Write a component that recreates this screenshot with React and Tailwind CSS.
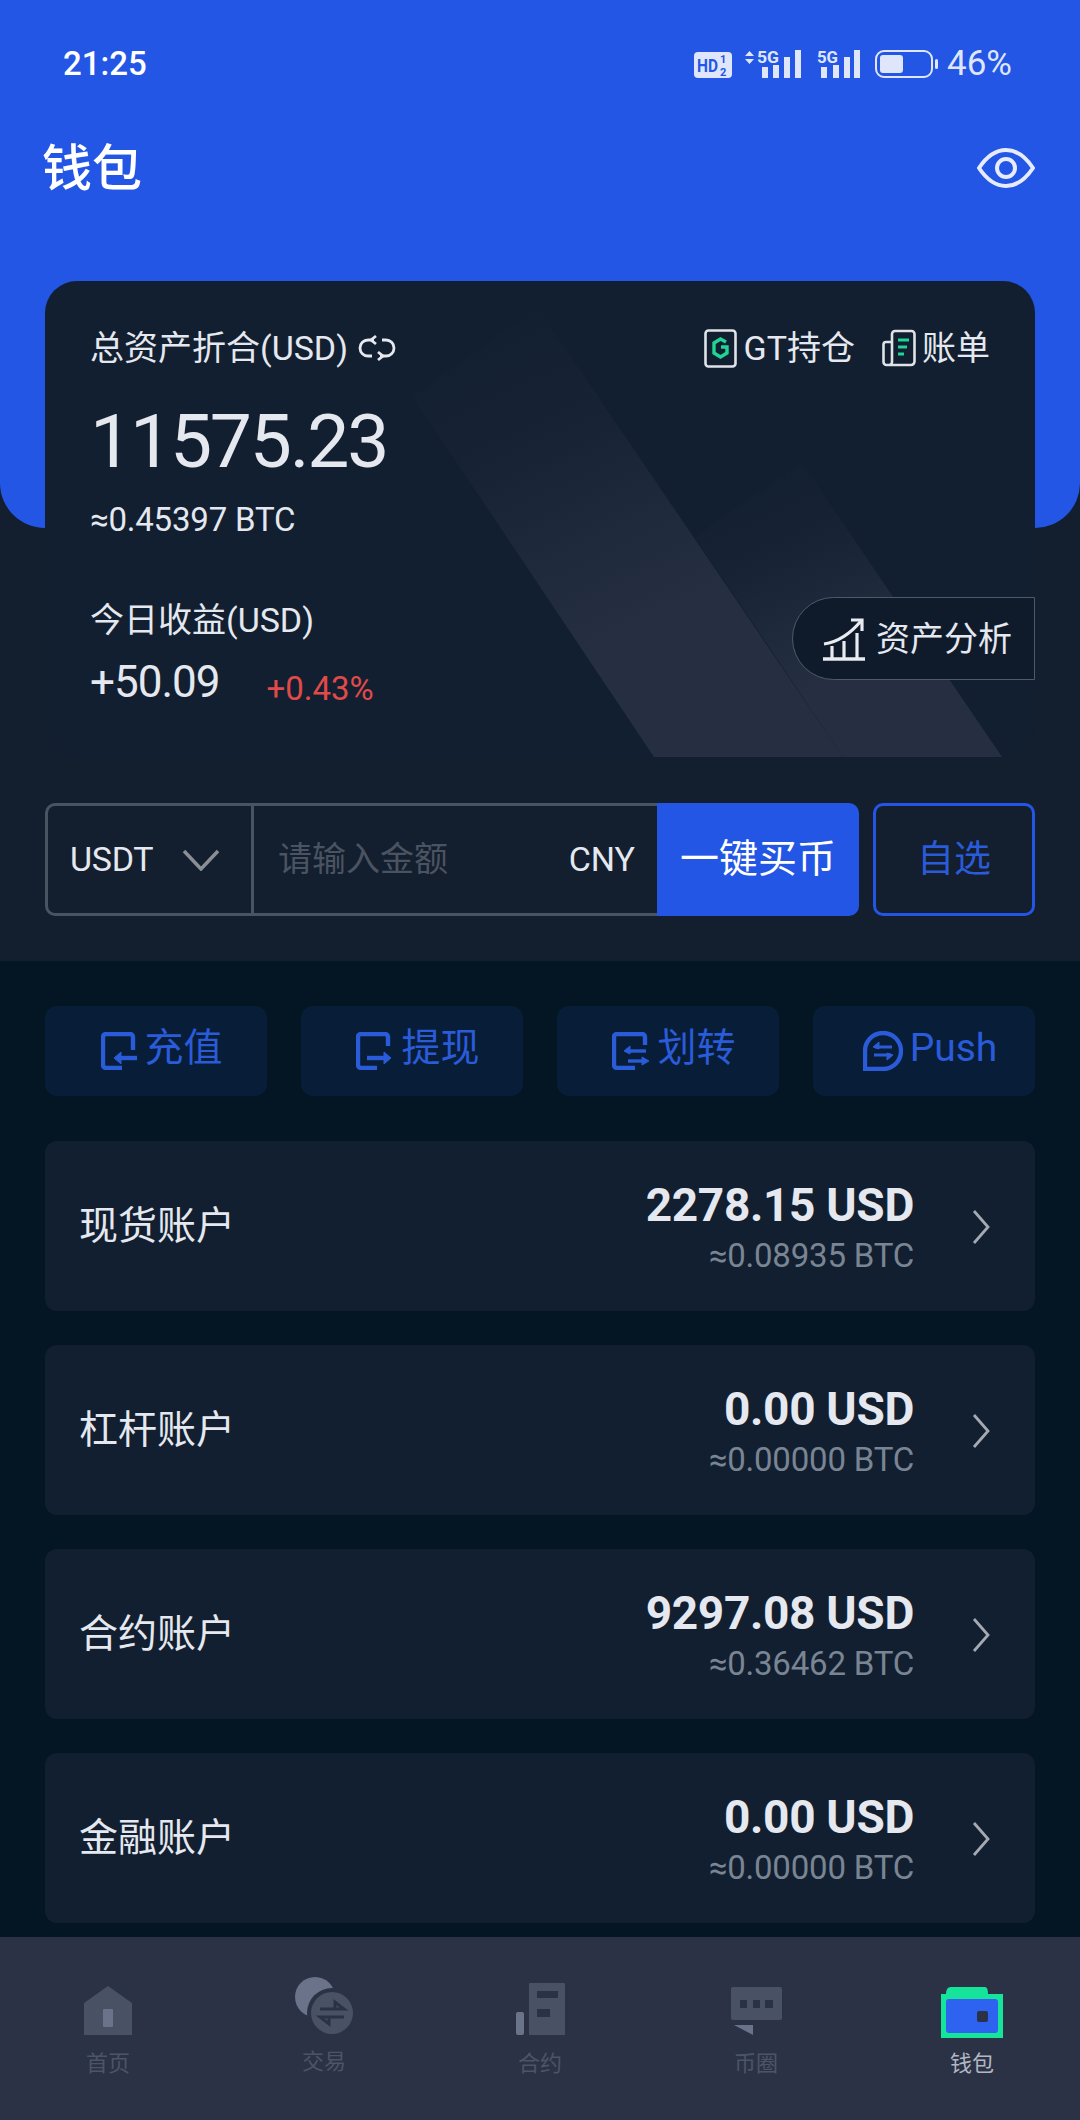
function StatusIcons() {
  return (
    <svg width="244" height="36" viewBox="0 0 244 36" className="block" fill="#dfe6fb">
      <rect x="0" y="6" width="38" height="26" rx="4" />
      <text x="3" y="26" fontSize="18" fontWeight="700" fill="#2456e6" fontFamily="Roboto" textLength="21" lengthAdjust="spacingAndGlyphs">HD</text>
      <text x="26" y="17" fontSize="11" fontWeight="700" fill="#2456e6" fontFamily="Roboto">1</text>
      <text x="26" y="30" fontSize="11" fontWeight="700" fill="#2456e6" fontFamily="Roboto">2</text>
      <path d="M51 10 L55.5 5 L60 10 Z M51 13 L60 13 L55.5 18 Z" />
      <text x="63" y="17" fontSize="17" fontWeight="700" fontFamily="Roboto" textLength="22" lengthAdjust="spacingAndGlyphs">5G</text>
      <rect x="68" y="21" width="6" height="11" />
      <rect x="79" y="19" width="6" height="13" />
      <rect x="90" y="11" width="6" height="21" />
      <rect x="101" y="4" width="6" height="28" />
      <text x="123" y="17" fontSize="17" fontWeight="700" fontFamily="Roboto" textLength="21" lengthAdjust="spacingAndGlyphs">5G</text>
      <rect x="127" y="21" width="6" height="11" />
      <rect x="139" y="19" width="6" height="13" />
      <rect x="150" y="11" width="6" height="21" />
      <rect x="160" y="4" width="6" height="28" />
      <rect x="182" y="5" width="56" height="26" rx="8" fill="none" stroke="#dfe6fb" strokeWidth="2" />
      <rect x="186" y="9" width="23" height="18" rx="3" />
      <rect x="241" y="13" width="3" height="10" rx="1.5" />
    </svg>
  );
}

function Eye() {
  return (
    <svg width="58" height="40" viewBox="0 0 58 40" fill="none" stroke="#e6ecfd" strokeWidth="4">
      <path d="M2 20 C10 8 19 2 29 2 C39 2 48 8 56 20 C48 32 39 38 29 38 C19 38 10 32 2 20 Z" />
      <circle cx="29" cy="20" r="9" />
    </svg>
  );
}

function Refresh() {
  return (
    <svg width="40" height="28" viewBox="0 0 40 28" fill="none" stroke="#e5e8ef" strokeWidth="2.8">
      <path d="M17 6 H11 A8 8 0 0 0 11 22 H15" />
      <path d="M23 22 H29 A8 8 0 0 0 29 6 H25" />
      <path d="M19 2 L14 6 L19 10" />
      <path d="M21 18 L26 22 L21 26" />
    </svg>
  );
}

function GtIcon() {
  return (
    <svg width="33" height="39" viewBox="0 0 33 39" fill="none">
      <rect x="1.5" y="1.5" width="30" height="36" rx="3" stroke="#dfe3e8" strokeWidth="2.6" />
      <path d="M22 13 L16.5 10 L10 14 V24 L16.5 28 L23 24 V18 H17" stroke="#1fd494" strokeWidth="3.4" />
    </svg>
  );
}

function BillIcon() {
  return (
    <svg width="34" height="38" viewBox="0 0 34 38" fill="none">
      <path d="M10 13 H4 A2.5 2.5 0 0 0 1.5 15.5 V33 A3 3 0 0 0 4.5 36 H29 A3.5 3.5 0 0 0 32.5 32.5 V5 A3 3 0 0 0 29.5 2 H13 A3 3 0 0 0 10 5 V33 A3 3 0 0 1 7 36" stroke="#dfe3e8" strokeWidth="2.6" />
      <path d="M16 11 H27 M16 18 H25 M16 25 H22" stroke="#1fd494" strokeWidth="2.8" />
    </svg>
  );
}

function ChartIcon() {
  return (
    <svg width="44" height="44" viewBox="0 0 44 44" fill="none" stroke="#e8ebef" strokeWidth="3.2">
      <path d="M1 42 H43" strokeWidth="3.6" />
      <path d="M10 42 V29 M22 42 V24 M35 42 V16" />
      <path d="M2 27 C16 25 28 17 39 4" />
      <path d="M29 3 H40 V14" />
    </svg>
  );
}

function Chevron({ className }) {
  return (
    <svg width="18" height="34" viewBox="0 0 18 34" fill="none" stroke="#a5aab2" strokeWidth="2.8" className={className}>
      <path d="M2 1 L16 17 L2 33" />
    </svg>
  );
}

function DepositIcon() {
  return (
    <svg width="36" height="38" viewBox="0 0 36 38" fill="none" stroke="#2a5bd8" strokeWidth="4.4">
      <path d="M21 36 H5 A3 3 0 0 1 2 33 V5 A3 3 0 0 1 5 2 H29 A3 3 0 0 1 32 5 V18" />
      <path d="M36 26 H17" />
      <path d="M20 20 L13 26 L20 32 Z" fill="#2a5bd8" strokeWidth="1" />
    </svg>
  );
}

function WithdrawIcon() {
  return (
    <svg width="38" height="38" viewBox="0 0 38 38" fill="none" stroke="#2a5bd8" strokeWidth="4.4">
      <path d="M32 14 V5 A3 3 0 0 0 29 2 H5 A3 3 0 0 0 2 5 V33 A3 3 0 0 0 5 36 H21" />
      <path d="M11 26 H30" />
      <path d="M28 20 L35 26 L28 32 Z" fill="#2a5bd8" strokeWidth="1" />
    </svg>
  );
}

function TransferIcon() {
  return (
    <svg width="38" height="38" viewBox="0 0 38 38" fill="none" stroke="#2a5bd8" strokeWidth="4.4">
      <path d="M33 13 V5 A3 3 0 0 0 30 2 H5 A3 3 0 0 0 2 5 V33 A3 3 0 0 0 5 36 H23" />
      <path d="M15 19 H34" strokeWidth="3.4" />
      <path d="M16 29 H34" strokeWidth="3.4" />
      <path d="M18 14 L12 19 L18 22 Z M30 25 L37 29 L30 33 Z" fill="#2a5bd8" strokeWidth="1" />
    </svg>
  );
}

function PushIcon() {
  return (
    <svg width="40" height="40" viewBox="0 0 40 40" fill="none" stroke="#2a5bd8" strokeWidth="4.4">
      <path d="M2 38 V20 A18 18 0 1 1 20 38 Z" />
      <path d="M12 16 H29 M11 24 H28" strokeWidth="3.2" />
      <path d="M16 11 L10 16 L16 18 Z M24 22 L30 24 L24 29 Z" fill="#2a5bd8" strokeWidth="1" />
    </svg>
  );
}

function HomeIcon() {
  return (
    <svg width="48" height="49" viewBox="0 0 48 49">
      <path d="M24 0 L48 17 V49 H0 V17 Z" fill="#495165" />
      <rect x="19" y="23" width="10" height="18" rx="1" fill="#6a7389" />
    </svg>
  );
}

function TradeIcon() {
  return (
    <svg width="58" height="58" viewBox="0 0 58 58">
      <ellipse cx="20" cy="20" rx="20" ry="20" fill="#6a7389" />
      <circle cx="37" cy="36" r="25" fill="#2b3245" />
      <circle cx="37" cy="36" r="21" fill="#495165" />
      <path d="M25 32 H49 L40 25 V32 M49 40 H25 L34 47 V40" fill="none" stroke="#2b3245" strokeWidth="3" />
    </svg>
  );
}

function FuturesIcon() {
  return (
    <svg width="49" height="52" viewBox="0 0 49 52">
      <rect x="0" y="29" width="8" height="23" rx="2" fill="#6a7389" />
      <rect x="13" y="0" width="36" height="52" rx="1" fill="#495165" />
      <rect x="21" y="8" width="21" height="7" fill="#2b3245" />
      <rect x="21" y="26" width="13" height="8" fill="#2b3245" />
    </svg>
  );
}

function ChatIcon() {
  return (
    <svg width="51" height="48" viewBox="0 0 51 48">
      <rect x="0" y="0" width="51" height="33" rx="2" fill="#495165" />
      <rect x="9" y="13" width="7" height="8" fill="#2b3245" />
      <rect x="22" y="13" width="7" height="8" fill="#2b3245" />
      <rect x="34" y="13" width="8" height="8" fill="#2b3245" />
      <path d="M3 38 H22 V48 Z" fill="#6a7389" />
    </svg>
  );
}

function WalletIcon() {
  return (
    <svg width="62" height="51" viewBox="0 0 62 51" className="-mb-[3px]">
      <path d="M5 7 Q5 0 10 0 H44 Q47 0 47 7 H62 V51 H0 V7 Z" fill="#17e49b" />
      <rect x="5" y="12" width="52" height="34" rx="3" fill="#2e62f0" />
      <rect x="36" y="24" width="11" height="11" rx="2" fill="#2b3245" />
    </svg>
  );
}

const actions = [
  { label: "充值", Icon: DepositIcon },
  { label: "提现", Icon: WithdrawIcon },
  { label: "划转", Icon: TransferIcon },
  { label: "Push", Icon: PushIcon },
];

const accounts = [
  { name: "现货账户", usd: "2278.15 USD", btc: "≈0.08935 BTC" },
  { name: "杠杆账户", usd: "0.00 USD", btc: "≈0.00000 BTC" },
  { name: "合约账户", usd: "9297.08 USD", btc: "≈0.36462 BTC" },
  { name: "金融账户", usd: "0.00 USD", btc: "≈0.00000 BTC" },
];

const tabs = [
  { label: "首页", Icon: HomeIcon, text: "text-[#4c5468]", extra: "mt-[15px]" },
  { label: "交易", Icon: TradeIcon, text: "text-[#4c5468]", extra: "mt-[13px]" },
  { label: "合约", Icon: FuturesIcon, text: "text-[#4c5468]", extra: "mt-[15px]" },
  { label: "币圈", Icon: ChatIcon, text: "text-[#4c5468]", extra: "mt-[15px]" },
  { label: "钱包", Icon: WalletIcon, text: "text-[#b2b7c3]", extra: "mt-[15px]" },
];

export default function App() {
  return (
    <div className="w-[1080px] h-[2120px] overflow-hidden flex flex-col bg-[#041524] font-[Roboto,'Noto_Sans_CJK_SC',sans-serif] text-[#e5e8ef]">
      <div className="bg-[#131e2e]">
        <header className="h-[528px] bg-[#2456e6] rounded-b-[45px]">
          <div className="flex items-center justify-between pt-[44px] pl-[63px] pr-[68px]">
            <span className="text-[33px] leading-[38px] font-medium text-white">21:25</span>
            <div className="flex items-center gap-[9px]">
              <StatusIcons />
              <span className="text-[35px] leading-[38px] mt-[1px] text-[#dfe6fb]">46%</span>
            </div>
          </div>
          <div className="flex items-center justify-between mt-[54px] pl-[42px] pr-[45px]">
            <h1 className="text-[50px] leading-[60px] font-medium text-white mt-[2px]">钱包</h1>
            <Eye />
          </div>
        </header>

        <div className="px-[45px] pb-[45px]">
          <section className="relative -mt-[247px] h-[476px] rounded-[32px] bg-[#121f30] overflow-hidden pl-[45px]">
            <svg className="absolute inset-0" width="990" height="476" viewBox="0 0 990 476">
              <defs>
                <linearGradient id="s" x1="0.2" y1="0" x2="0.6" y2="0.9">
                  <stop offset="0" stopColor="#252f41" stopOpacity="0" />
                  <stop offset="0.3" stopColor="#252f41" stopOpacity="0.25" />
                  <stop offset="0.8" stopColor="#252f41" stopOpacity="1" />
                </linearGradient>
              </defs>
              <path d="M368 116 L492 26 L798 476 L609 476 Z" fill="url(#s)" />
              <path d="M650 256 L757 182 L957 476 L798 476 Z" fill="url(#s)" />
            </svg>

            <div className="relative flex items-center justify-between pt-[45px] pr-[45px]">
              <div className="flex items-center gap-[9px]">
                <span className="text-[34px] leading-[44px]">总资产折合(USD)</span>
                <Refresh />
              </div>
              <div className="flex items-center">
                <GtIcon />
                <span className="ml-[7px] text-[34px] leading-[44px]">GT持仓</span>
                <span className="ml-[27px]"><BillIcon /></span>
                <span className="ml-[6px] text-[34px] leading-[44px]">账单</span>
              </div>
            </div>
            <div className="relative mt-[29px] text-[75px] leading-[84px] tracking-[-2.2px]">11575.23</div>
            <div className="relative mt-[17px] text-[33px] leading-[40px] tracking-[-0.2px]">≈0.45397 BTC</div>
            <div className="relative mt-[58px] text-[34px] leading-[44px]">今日收益(USD)</div>
            <div className="relative mt-[14px] flex items-end">
              <span className="text-[44px] leading-[52px] tracking-[-1px]">+50.09</span>
              <span className="ml-[47px] -mb-[1px] text-[33px] leading-[40px] text-[#e04a4a]">+0.43%</span>
            </div>

            <div className="absolute right-0 top-[316px] w-[243px] h-[83px] flex items-center pl-[29px] gap-[10px] rounded-l-full border border-[#4f5a69] bg-[#0f1b2b]">
              <ChartIcon />
              <span className="text-[34px] leading-[44px]">资产分析</span>
            </div>
          </section>

          <div className="flex mt-[46px] h-[113px]">
            <div className="flex w-[612px] border-[3px] border-r-0 border-[#4a5361] rounded-l-[10px]">
              <div className="w-[206px] shrink-0 flex items-center pl-[22px] border-r-[3px] border-[#4a5361]">
                <span className="text-[34px] tracking-[-0.3px]">USDT</span>
                <svg className="ml-[29px]" width="38" height="22" viewBox="0 0 38 22" fill="none" stroke="#8a8f96" strokeWidth="3.5">
                  <path d="M2 2 L19 20 L36 2" />
                </svg>
              </div>
              <div className="flex-1 flex items-center justify-between pl-[24px] pr-[22px]">
                <span className="text-[34px] text-[#4a5361]">请输入金额</span>
                <span className="text-[34px]">CNY</span>
              </div>
            </div>
            <div className="w-[202px] flex items-center justify-center bg-[#2456e6] rounded-r-[10px] text-[39px] text-white">一键买币</div>
            <div className="ml-[14px] flex-1 flex items-center justify-center rounded-[10px] border-[3px] border-[#2456e6] text-[37px] text-[#2a5bd8]">自选</div>
          </div>
        </div>
      </div>

      <div className="flex-1 px-[45px] pt-[45px]">
        <div className="grid grid-cols-4 gap-[34px]">
          {actions.map(({ label, Icon }) => (
            <div key={label} className="h-[90px] flex items-center justify-center gap-[7px] pl-[12px] rounded-[12px] bg-[#081d38] text-[39px] text-[#2a5bd8]">
              <Icon />
              <span className="-mt-[6px]">{label}</span>
            </div>
          ))}
        </div>
        <div className="mt-[45px] flex flex-col gap-[34px]">
          {accounts.map((a) => (
            <div key={a.name} className="h-[170px] flex items-center pl-[34px] pr-[45px] rounded-[12px] bg-[#121f30]">
              <span className="text-[39px]">{a.name}</span>
              <div className="ml-auto flex flex-col items-end">
                <span className="text-[46px] leading-[54px] font-bold tracking-[-0.3px]">{a.usd}</span>
                <span className="text-[33px] leading-[38px] mt-[5px] text-[#7a8594] tracking-[-0.2px]">{a.btc}</span>
              </div>
              <Chevron className="ml-[58px] mt-[2px]" />
            </div>
          ))}
        </div>
      </div>

      <nav className="h-[183px] shrink-0 bg-[#2b3245] grid grid-cols-5">
        {tabs.map(({ label, Icon, text, extra }) => (
          <div key={label} className="flex flex-col items-center">
            <div className="h-[98px] flex items-end"><Icon /></div>
            <span className={`text-[22px] leading-[28px] ${text} ${extra}`}>{label}</span>
          </div>
        ))}
      </nav>
    </div>
  );
}
